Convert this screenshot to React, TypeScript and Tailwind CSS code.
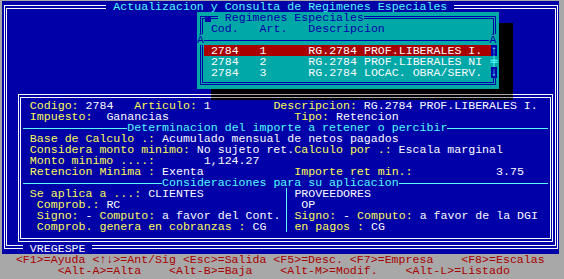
import React from "react";

const Y = ({ children }: { children: React.ReactNode }) => (
  <span className="text-[#fcfc54]">{children}</span>
);
const W = ({ children }: { children: React.ReactNode }) => (
  <span className="text-[#fcfcfc]">{children}</span>
);

function Row({ children, className = "" }: { children?: React.ReactNode; className?: string }) {
  return <div className={`h-[11px] pt-[1px] whitespace-pre ${className}`}>{children}</div>;
}

function Popup() {
  return (
    <div className="absolute left-[195px] top-[11px] w-[302px] h-[77px] bg-[#00a8a8]">
      <div className="ml-[3px] mt-[4px] w-[296px] h-[69px] border border-[#0000a8] p-[1px]">
        <div className="h-full border border-[#0000a8] pt-[4px]">
          <Row className="pl-[7.875px] text-[#0000a8]">{"Cod.   Art.   Descripcion"}</Row>
          <div className="h-[11px] pt-[6px] px-[1px]">
            <div className="h-px bg-[#0000a8]" />
          </div>
          <Row className="ml-[1px] w-[287px] bg-[#a80000] pl-[6.875px] text-[#fcfcfc]">
            {"2784   1      RG.2784 PROF.LIBERALES I."}
          </Row>
          <Row className="pl-[7.875px] text-[#fcfcfc]">{"2784   2      RG.2784 PROF.LIBERALES NI"}</Row>
          <Row className="pl-[7.875px] text-[#fcfcfc]">{"2784   3      RG.2784 LOCAC. OBRA/SERV."}</Row>
        </div>
      </div>
      {/* close box */}
      <div className="absolute left-[8px] top-[4px] w-[6px] h-[6px] bg-[#0000a8]" />
      {/* title */}
      <div className="absolute left-[20.84px] top-0 h-[11px] pt-[1px] w-[146.2px] bg-[#00a8a8] whitespace-pre text-[#0000a8]">
        {" Regimenes Especiales"}
      </div>
      {/* junctions */}
      <div className="absolute left-0 top-[22px] w-[7px] h-[11px] pt-[1px] bg-[#00a8a8] text-[#0000a8] flex justify-center">
        Ã
      </div>
      <div className="absolute left-[292.4px] top-[22px] w-[7px] h-[11px] pt-[1px] bg-[#00a8a8] text-[#0000a8] flex justify-center">
        Â
      </div>
      {/* scrollbar */}
      <div className="absolute left-[294px] top-[33px] w-[6px] flex flex-col text-[#54fcfc]">
        <div className="h-[11px] pt-[1px] bg-[#0000a8] flex justify-center">↑</div>
        <div className="h-[11px] pt-[1px] bg-[#00a8a8] flex justify-center">╪</div>
        <div className="h-[11px] pt-[1px] bg-[#0000a8] flex justify-center">↓</div>
      </div>
    </div>
  );
}

export default function App() {
  return (
    <div className="w-[564px] h-[279px] bg-[#a8a8a8] pt-[1px] pl-[2px] overflow-hidden font-['Liberation_Mono',monospace] text-[11.604px] leading-[10px]">
      <div className="relative w-[557px] h-[275px] bg-[#0000a8] flex flex-col">
        <div className="h-[253px] pt-[4px] pl-[2px]">
          <div className="w-[554px] h-[244px] border border-[#fcfcfc] px-[1px] py-[2px]">
            <div className="h-full border border-[#fcfcfc] pl-[11px] pt-[85px]">
              <div className="w-[535px] h-[148px] border border-[#fcfcfc] px-[1px] py-[2px]">
                <div className="h-full border border-[#fcfcfc] pt-[2px]">
                  <div className="pl-[8.85px]">
                    <Row>
                      <Y>Codigo:</Y>
                      <W>{" 2784   "}</W>
                      <Y>Articulo:</Y>
                      <W>{" 1         "}</W>
                      <Y>Descripcion:</Y>
                      <W>{" RG.2784 PROF.LIBERALES I."}</W>
                    </Row>
                    <Row>
                      <Y>Impuesto:</Y>
                      <W>{"  Ganancias                  "}</W>
                      <Y>Tipo:</Y>
                      <W>{" Retencion"}</W>
                    </Row>
                  </div>
                  <div className="h-[11px] flex items-start whitespace-pre">
                    <div className="ml-[2px] w-[104.3px] h-px mt-[6px] bg-[#54fcfc]" />
                    <span className="pt-[1px] text-[#54fcfc]">Determinacion del importe a retener o percibir</span>
                    <div className="flex-1 mr-[2px] h-px mt-[6px] bg-[#54fcfc]" />
                  </div>
                  <div className="pl-[8.85px]">
                    <Row>
                      <Y>Base de Calculo .:</Y>
                      <W>{" Acumulado mensual de netos pagados"}</W>
                    </Row>
                    <Row>
                      <Y>Considera monto minimo:</Y>
                      <W>{" No sujeto ret."}</W>
                      <Y>Calculo por .:</Y>
                      <W>{" Escala marginal"}</W>
                    </Row>
                    <Row>
                      <Y>Monto minimo ....:</Y>
                      <W>{"       1,124.27"}</W>
                    </Row>
                    <Row>
                      <Y>Retencion Minima :</Y>
                      <W>{" Exenta             "}</W>
                      <Y>Importe ret min.:</Y>
                      <W>{"            3.75"}</W>
                    </Row>
                  </div>
                  <div className="h-[11px] flex items-start whitespace-pre">
                    <div className="ml-[2px] w-[139.1px] h-px mt-[6px] bg-[#54fcfc]" />
                    <span className="pt-[1px] text-[#54fcfc]">Consideraciones para su aplicacion</span>
                    <div className="flex-1 mr-[2px] h-px mt-[6px] bg-[#54fcfc]" />
                  </div>
                  <div className="flex">
                    <div className="w-[266px] h-[44px] border-r border-[#54fcfc] pl-[8.85px]">
                      <Row>
                        <Y>Se aplica a ...:</Y>
                        <W>{" CLIENTES"}</W>
                      </Row>
                      <Row>
                        {" "}
                        <Y>Comprob.:</Y>
                        <W>{" RC"}</W>
                      </Row>
                      <Row>
                        {" "}
                        <Y>Signo:</Y>
                        <W>{" - "}</W>
                        <Y>Computo:</Y>
                        <W>{" a favor del Cont."}</W>
                      </Row>
                      <Row>
                        {" "}
                        <Y>Comprob. genera en cobranzas :</Y>
                        <W>{" CG"}</W>
                      </Row>
                    </div>
                    <div className="pl-[7.4px]">
                      <Row>
                        <W>PROVEEDORES</W>
                      </Row>
                      <Row>
                        <W>{" OP"}</W>
                      </Row>
                      <Row>
                        <Y>Signo:</Y>
                        <W>{" - "}</W>
                        <Y>Computo:</Y>
                        <W>{" a favor de la DGI"}</W>
                      </Row>
                      <Row>
                        <Y>en pagos :</Y>
                        <W>{" CG"}</W>
                      </Row>
                    </div>
                  </div>
                </div>
              </div>
            </div>
          </div>
        </div>
        <div className="h-[22px] bg-[#a8a8a8] text-[#a80000]">
          <Row>{"  <F1>=Ayuda <↑↓>=Ant/Sig <Esc>=Salida <F5>=Desc. <F7>=Empresa    <F8>=Escalas"}</Row>
          <Row>{"        <Alt-A>=Alta    <Alt-B>=Baja    <Alt-M>=Modif.    <Alt-L>=Listado"}</Row>
        </div>

        {/* screen title over the frame */}
        <div className="absolute left-[104.4px] top-0 h-[11px] pt-[1px] w-[348.1px] bg-[#0000a8] text-[#54fcfc] whitespace-pre">
          {" Actualizacion y Consulta de Regimenes Especiales "}
        </div>
        {/* program name over the bottom frame */}
        <div className="absolute left-[20.9px] top-[242px] h-[11px] pt-[1px] w-[69.6px] bg-[#0000a8] text-[#fcfcfc] whitespace-pre">
          {" VREGESPE "}
        </div>

        {/* popup shadow */}
        <div className="absolute left-[497px] top-[22px] w-[14px] h-[77px] bg-black" />
        <div className="absolute left-[209px] top-[88px] w-[302px] h-[11px] bg-black">
          <div className="mt-[5px] h-px bg-[#a8a8a8]" />
          <div className="mt-[2px] h-px bg-[#a8a8a8]" />
        </div>

        <Popup />
      </div>
    </div>
  );
}
